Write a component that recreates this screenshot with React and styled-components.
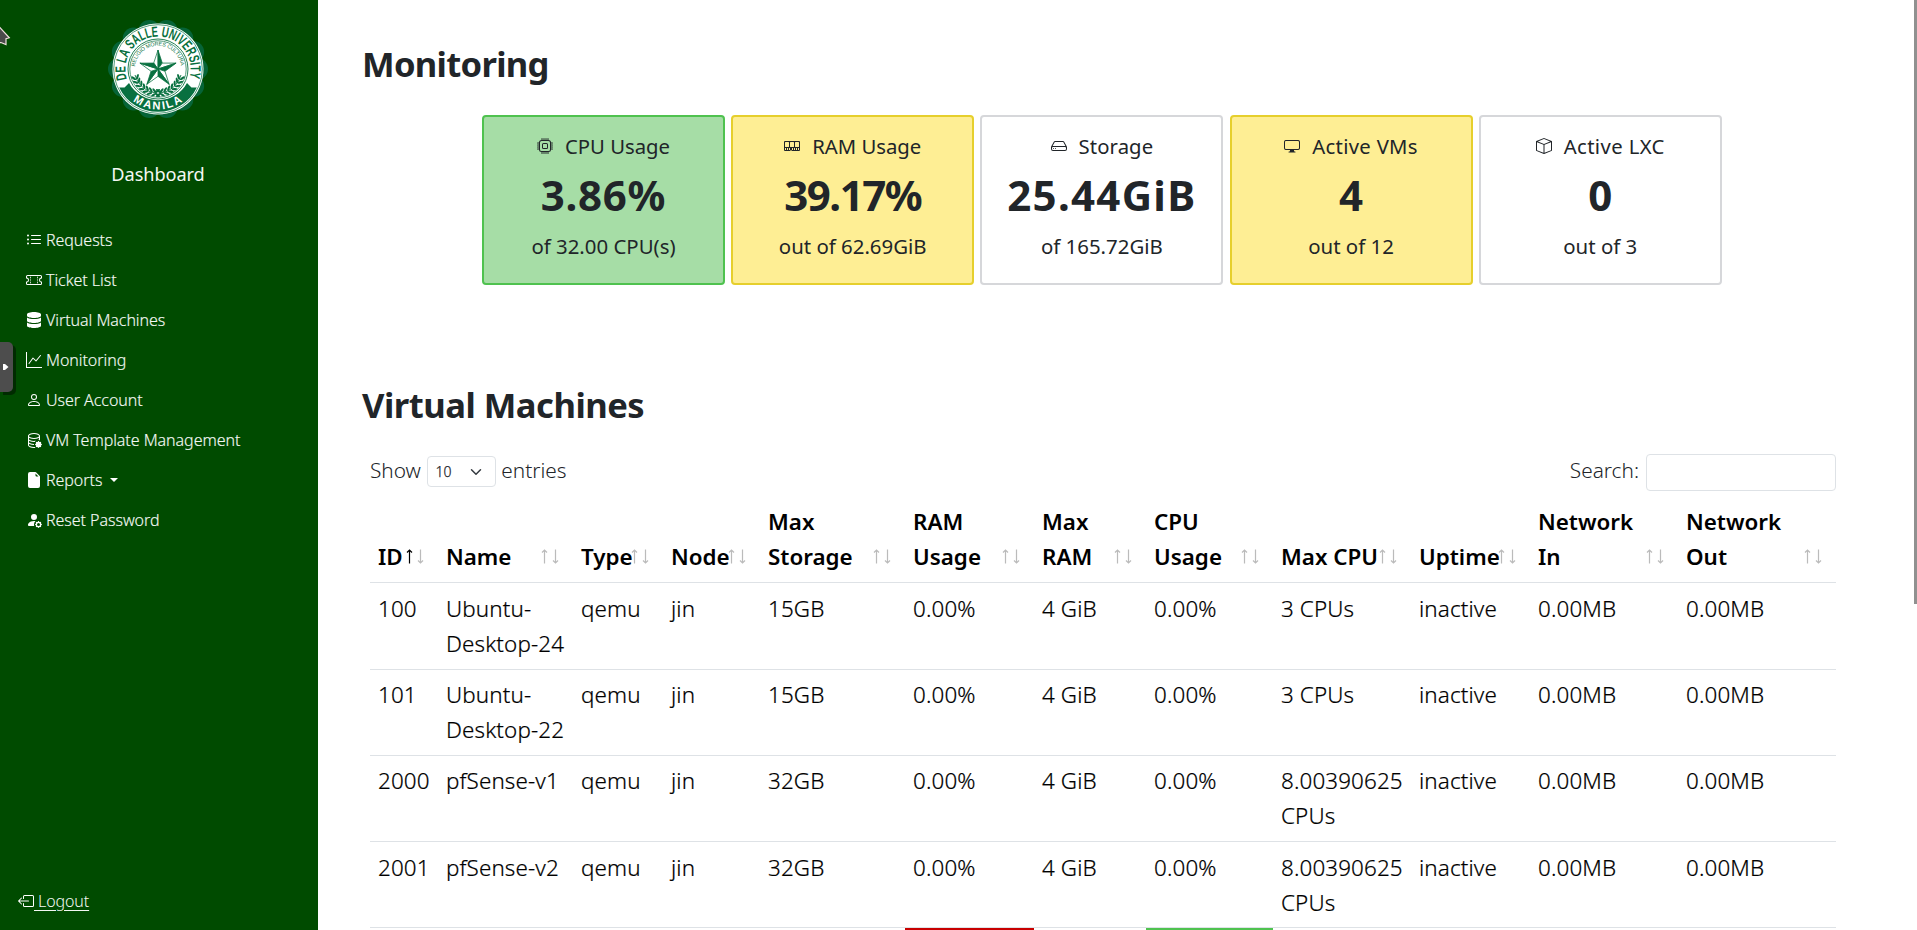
import React from "react";
import styled, { createGlobalStyle, css } from "styled-components";
import {
  BsListUl, BsTicketPerforated, BsGraphUp, BsPerson, BsDatabaseGear, BsFileEarmarkFill,
  BsPersonFillGear, BsBoxArrowLeft, BsCpu, BsMemory, BsHdd, BsDisplay, BsBox,
} from "react-icons/bs";
import { FaDatabase } from "react-icons/fa";

const GlobalStyle = createGlobalStyle`
  *, *::before, *::after { box-sizing: border-box; }
  body { margin: 0; background: #fff; color: #212529; font-family: "Noto Sans", "Open Sans", sans-serif; }
`;

const Page = styled.div`
  position: relative;
  display: flex;
  width: 100%;
  height: 930px;
  overflow: hidden;
`;

const Sidebar = styled.aside`
  display: flex;
  flex-direction: column;
  flex: 0 0 318px;
  padding: 18px 18px 15px;
  background: #004b00;
  color: #f4f8f4;
  font-weight: 300;
  font-size: 16px;
`;

const Seal = styled.svg`
  display: block;
  width: 102px;
  height: 102px;
  margin: 0 0 0 89px;
`;

const SidebarTitle = styled.div`
  margin: 40px 0 32px;
  padding-right: 2px;
  text-align: center;
  font-size: 18.2px;
  font-weight: 400;
  line-height: 28px;
  letter-spacing: -0.1px;
`;

const NavList = styled.nav`
  display: flex;
  flex-direction: column;
  padding-left: 8px;
`;

const NavItem = styled.a`
  display: flex;
  align-items: center;
  gap: 4px;
  height: 40px;
  letter-spacing: -0.05px;
  white-space: nowrap;
  -webkit-text-stroke: 0.15px;
  svg { flex: none; color: #fff; }
`;

const Caret = styled.span`
  margin-left: 4px;
  border-top: 4.8px solid #fff;
  border-left: 4.8px solid transparent;
  border-right: 4.8px solid transparent;
`;

const Logout = styled.a`
  display: flex;
  align-items: center;
  height: 28px;
  margin-top: auto;
  white-space: pre;
  svg { color: #fff; }
  span { text-decoration: underline; text-underline-offset: 3px; letter-spacing: -0.1px; }
`;

const Main = styled.main`
  flex: 1;
  min-width: 0;
  padding: 39px 81px 0 44px;
`;

const Heading = styled.h1`
  margin: 0;
  font-size: 34.6px;
  line-height: 50px;
  font-weight: 700;
  letter-spacing: ${(p) => p.$track || 0}px;
`;

const Cards = styled.div`
  display: flex;
  gap: 6.2px;
  margin: 26px 0 95px 120px;
`;

const tones = {
  green: css`background: #a6dda6; border-color: #4fc24f;`,
  yellow: css`background: #feee94; border-color: #e6cf2c;`,
  plain: css`background: #fff; border-color: #d6d7da;`,
};

const Card = styled.section`
  width: 243px;
  height: 170px;
  padding-top: 13px;
  border: 2px solid;
  border-radius: 4px;
  text-align: center;
  ${(p) => tones[p.$tone]}
`;

const CardTitle = styled.div`
  display: flex;
  align-items: center;
  justify-content: center;
  gap: 12px;
  height: 32px;
  font-size: 20.3px;
  letter-spacing: ${(p) => p.$track || 0}px;
  svg { flex: none; }
`;

const CardValue = styled.div`
  height: 65px;
  line-height: 65px;
  font-size: 42px;
  font-weight: 700;
  letter-spacing: ${(p) => p.$track || 0}px;
`;

const CardNote = styled.div`
  height: 38px;
  line-height: 38px;
  font-size: 20.4px;
`;

const Toolbar = styled.div`
  display: flex;
  align-items: center;
  justify-content: space-between;
  height: 42px;
  margin: 19px 0 0 8px;
  font-size: 20.8px;
  font-weight: 300;
`;

const Field = styled.label`
  display: flex;
  align-items: center;
  gap: ${(p) => p.$gap}px;
`;

const Select = styled.span`
  display: flex;
  align-items: center;
  justify-content: space-between;
  width: 69px;
  height: 31px;
  margin-top: 3px;
  padding: 0 13px 0 8px;
  border: 1px solid #dee2e6;
  border-radius: 4px;
  font-size: 14px;
  -webkit-text-stroke: 0.25px;
`;

const SearchInput = styled.input`
  width: 190px;
  height: 37px;
  margin-top: 4px;
  border: 1px solid #dee2e6;
  border-radius: 4px;
  background: #fff;
`;

const Table = styled.table`
  width: 1466px;
  margin: 6px 0 0 8px;
  table-layout: fixed;
  border-collapse: separate;
  border-spacing: 0;
  color: #000;
  font-size: 22.4px;
  line-height: 35.1px;
`;

const Th = styled.th`
  position: relative;
  height: 86.4px;
  padding: 7px 8px 8px;
  border-bottom: 1px solid #dee2e6;
  text-align: left;
  vertical-align: bottom;
  font-weight: 600;
  white-space: pre-line;
`;

const SortArrows = styled.svg`
  position: absolute;
  right: 11px;
  bottom: 17px;
  width: 22px;
  height: 18px;
`;

const Td = styled.td`
  height: 86.25px;
  padding: 7.5px 0 7px 8px;
  border-bottom: 1px solid #dee2e6;
  vertical-align: top;
  font-weight: 300;
  letter-spacing: 0.12px;
  white-space: pre-line;
  -webkit-text-stroke: 0.2px;
  ${(p) => p.$alert === "red" && css`border: 2px solid #c80000; background: #f3a0a0;`}
  ${(p) => p.$alert === "green" && css`border: 2px solid #4fc24f; background: #a6dda6;`}
`;

const Scrollbar = styled.div`
  position: absolute;
  top: 0;
  right: 0;
  width: 3px;
  height: 604px;
  background: #909190;
`;

const DrawerHandle = styled.div`
  position: absolute;
  left: 0;
  top: 342px;
  display: flex;
  align-items: center;
  width: 13px;
  height: 50px;
  padding-left: 3px;
  border-radius: 0 5px 5px 0;
  background: #4d4d4d;
  box-shadow: 3px 3px 0 rgba(0, 0, 0, 0.42);
`;

const Pointer = styled.svg`
  position: absolute;
  left: 0;
  top: 25px;
  width: 12px;
  height: 22px;
`;

const leaves = Array.from({ length: 8 }, (_, i) => 20 + i * 10);

function UniversitySeal() {
  return (
    <Seal viewBox="-51 -51 102 102" fontFamily='"Liberation Sans Narrow", "Liberation Sans", sans-serif' fontWeight="700">
      <g fill="#066437">
        {Array.from({ length: 14 }, (_, i) => {
          const a = ((i + 0.5) * Math.PI * 2) / 14;
          return <circle key={i} cx={39 * Math.sin(a)} cy={-39 * Math.cos(a)} r="11" />;
        })}
      </g>
      <circle r="45.5" fill="#fff" />
      <circle r="44.3" fill="none" stroke="#087040" strokeWidth="0.7" />
      <path d="M-38.8 18.4 L-33.5 18.5 L-29 14 A33 33 0 0 0 29 14 L33.5 18.5 L38.8 18.4 A43 43 0 0 1 -38.8 18.4Z" fill="#087040" />
      <circle r="30" fill="#fff" stroke="#087040" strokeWidth="0.9" />
      <circle r="28.2" fill="none" stroke="#087040" strokeWidth="0.7" />
      <path id="seal-name" d="M-31 10.2 A32.6 32.6 0 1 1 31 10.2" fill="none" />
      <path id="seal-city" d="M-33.2 23.2 A40.5 40.5 0 0 0 33.2 23.2" fill="none" />
      <path id="seal-motto" d="M-23 -2.4 A23.1 23.1 0 0 1 23 -2.4" fill="none" />
      <text fill="#087040" fontSize="14.6">
        <textPath href="#seal-name" textLength="121" lengthAdjust="spacingAndGlyphs">DE LA SALLE UNIVERSITY</textPath>
      </text>
      <text fill="#fff" fontSize="11.2">
        <textPath href="#seal-city" startOffset="12" textLength="53" lengthAdjust="spacing">MANILA</textPath>
      </text>
      <text fill="#087040" fontSize="5.4" fontWeight="400">
        <textPath href="#seal-motto" textLength="67" lengthAdjust="spacing">RELIGIO MORES CULTURA</textPath>
      </text>
      {[0, 72, 144, 216, 288].map((a) => (
        <g key={a} transform={`rotate(${a})`} stroke="#087040" strokeWidth="0.7" strokeLinejoin="round">
          <path d="M0 -19 L0 0 L-4.3 -5.9Z" fill="#fff" />
          <path d="M0 -19 L0 0 L4.3 -5.9Z" fill="#087040" />
        </g>
      ))}
      {[1, -1].map((s) => (
        <g key={s} transform={`scale(${s} 1)`} fill="#087040">
          <path d="M2 24 A24 24 0 0 0 23 6" fill="none" stroke="#087040" strokeWidth="0.9" />
          {leaves.map((d) => {
            const a = (d * Math.PI) / 180;
            return (
              <g key={d} transform={`translate(${24 * Math.cos(a)} ${24 * Math.sin(a)}) rotate(${d - 90})`}>
                <ellipse cx="1" cy="-1.8" rx="2.9" ry="1.1" transform="rotate(-38)" />
                <ellipse cx="1" cy="1.8" rx="2.9" ry="1.1" transform="rotate(38)" />
              </g>
            );
          })}
        </g>
      ))}
    </Seal>
  );
}

const nav = [
  { icon: BsListUl, label: "Requests" },
  { icon: BsTicketPerforated, label: "Ticket List" },
  { icon: FaDatabase, label: "Virtual Machines" },
  { icon: BsGraphUp, label: "Monitoring" },
  { icon: BsPerson, label: "User Account" },
  { icon: BsDatabaseGear, label: "VM Template Management" },
  { icon: BsFileEarmarkFill, label: "Reports", caret: true },
  { icon: BsPersonFillGear, label: "Reset Password" },
];

const cards = [
  { icon: BsCpu, title: "CPU Usage", value: "3.86%", note: "of 32.00 CPU(s)", tone: "green", titleTrack: 0, track: 0.7 },
  { icon: BsMemory, title: "RAM Usage", value: "39.17%", note: "out of 62.69GiB", tone: "yellow", titleTrack: 0, track: -1.5 },
  { icon: BsHdd, title: "Storage", value: "25.44GiB", note: "of 165.72GiB", tone: "plain", titleTrack: 0.1, track: 1.3 },
  { icon: BsDisplay, title: "Active VMs", value: "4", note: "out of 12", tone: "yellow", titleTrack: 0.3, track: 0 },
  { icon: BsBox, title: "Active LXC", value: "0", note: "out of 3", tone: "plain", titleTrack: 0.4, track: 0 },
];

const columns = [
  ["ID", 68], ["Name", 135], ["Type", 90], ["Node", 97], ["Max\nStorage", 145], ["RAM\nUsage", 129],
  ["Max\nRAM", 112], ["CPU\nUsage", 127], ["Max CPU", 138], ["Uptime", 119], ["Network\nIn", 148], ["Network\nOut", 158],
];

const vm = (id, name, storage, cpus) => [
  id, name, "qemu", "jin", storage, "0.00%", "4 GiB", "0.00%", cpus, "inactive", "0.00MB", "0.00MB",
];

const rows = [
  vm("100", "Ubuntu-\nDesktop-24", "15GB", "3 CPUs"),
  vm("101", "Ubuntu-\nDesktop-22", "15GB", "3 CPUs"),
  vm("2000", "pfSense-v1", "32GB", "8.00390625\nCPUs"),
  vm("2001", "pfSense-v2", "32GB", "8.00390625\nCPUs"),
];

const alerts = { 5: "red", 7: "green" };

export default function App() {
  return (
    <>
      <GlobalStyle />
      <Page>
        <Sidebar>
          <UniversitySeal />
          <SidebarTitle>Dashboard</SidebarTitle>
          <NavList>
            {nav.map(({ icon: Icon, label, caret }) => (
              <NavItem key={label}>
                <Icon size={16} />
                <span>{label}</span>
                {caret && <Caret />}
              </NavItem>
            ))}
          </NavList>
          <Logout><BsBoxArrowLeft size={16} /><span> Logout</span></Logout>
        </Sidebar>
        <Main>
          <Heading $track={-0.7}>Monitoring</Heading>
          <Cards>
            {cards.map(({ icon: Icon, title, value, note, tone, titleTrack, track }) => (
              <Card key={title} $tone={tone}>
                <CardTitle $track={titleTrack}><Icon size={16} /><span>{title}</span></CardTitle>
                <CardValue $track={track}>{value}</CardValue>
                <CardNote>{note}</CardNote>
              </Card>
            ))}
          </Cards>
          <Heading $track={-0.5}>Virtual Machines</Heading>
          <Toolbar>
            <Field $gap={5.7}>
              <span>Show</span>
              <Select>
                10
                <svg width="12" height="12" viewBox="0 0 16 16" fill="none" stroke="#343a40" strokeWidth="2" strokeLinecap="round" strokeLinejoin="round"><path d="m2 5 6 6 6-6" /></svg>
              </Select>
              <span>entries</span>
            </Field>
            <Field $gap={7}>
              <span>Search:</span>
              <SearchInput />
            </Field>
          </Toolbar>
          <Table>
            <colgroup>{columns.map(([c, w]) => <col key={c} width={w} />)}</colgroup>
            <thead>
              <tr>
                {columns.map(([c], i) => (
                  <Th key={c}>
                    {c}
                    <SortArrows viewBox="0 0 22 18" fill="none" strokeWidth="1.2">
                      <path d="M4.5 16.5V3M2 5.5 4.5 3 7 5.5" stroke={i === 0 ? "#000" : "#bbb"} />
                      <path d="M15.5 2.5V16M13 13.5 15.5 16 18 13.5" stroke="#bbb" />
                    </SortArrows>
                  </Th>
                ))}
              </tr>
            </thead>
            <tbody>
              {rows.map((r) => (
                <tr key={r[0]}>{r.map((v, i) => <Td key={i}>{v}</Td>)}</tr>
              ))}
              <tr>{columns.map(([c], i) => <Td key={c} $alert={alerts[i]} />)}</tr>
            </tbody>
          </Table>
        </Main>
        <Scrollbar />
        <DrawerHandle>
          <svg width="6" height="8" viewBox="0 0 6 8"><path d="M0 1h2l3.5 3L2 7H0Z" fill="#fff" /></svg>
        </DrawerHandle>
        <Pointer viewBox="0 0 12 22">
          <path d="M-5 -3 L9.3 12.8 L6 13.8 V19.5 L1 17.5 L-5 18Z" fill="#4a4a4a" stroke="#f0dede" strokeWidth="1.2" />
        </Pointer>
      </Page>
    </>
  );
}
